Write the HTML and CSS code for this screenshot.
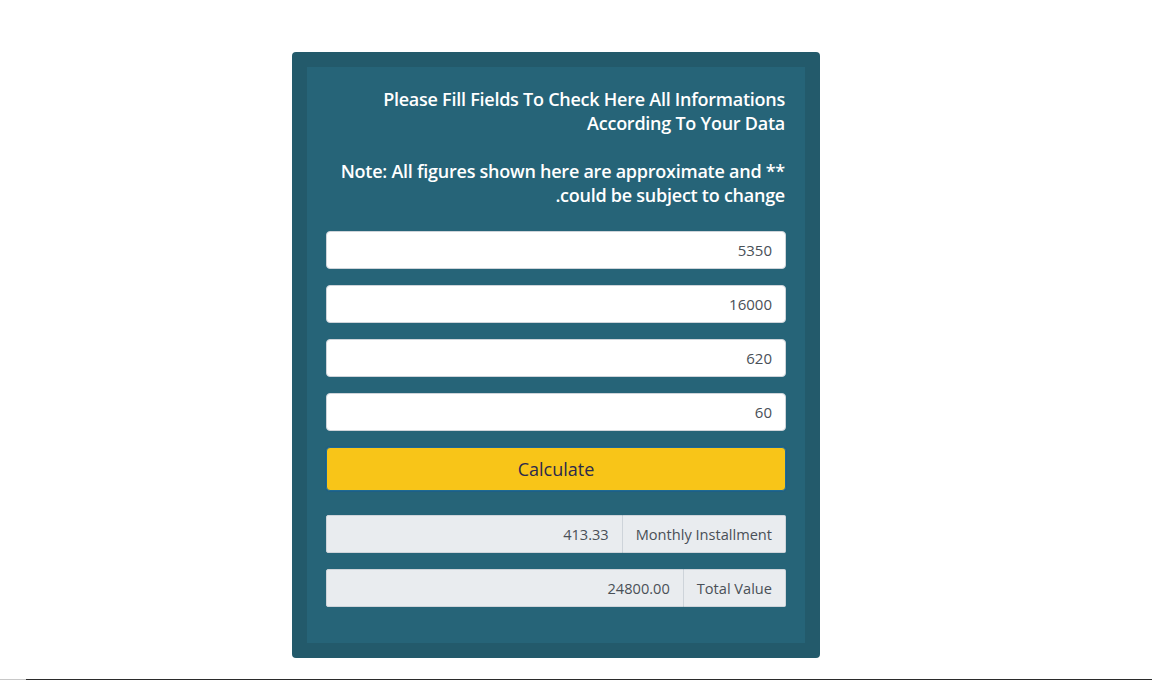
FILE: index.html
```html
<!DOCTYPE html>
<html lang="en">
<head>
    <meta charset="UTF-8">
    <meta name="viewport" content="width=device-width, initial-scale=1.0">
    <title>Installment Calculator</title>
    <link rel="stylesheet" href="styles.css">
</head>
<body>
    <div class="page">
        <div class="calc-card">
            <div class="calc-inner">
                <p class="intro">Please Fill Fields To Check Here All Informations<br>According To Your Data</p>
                <p class="intro">Note: All figures shown here are approximate and **<br>.could be subject to change</p>

                <div class="fields">
                    <input class="field" type="text" value="5350">
                    <input class="field" type="text" value="16000">
                    <input class="field" type="text" value="620">
                    <input class="field" type="text" value="60">
                </div>

                <button class="calc-btn" type="button">Calculate</button>

                <div class="results">
                    <div class="result-row">
                        <input class="result-value" type="text" value="413.33" readonly>
                        <span class="result-label">Monthly Installment</span>
                    </div>
                    <div class="result-row">
                        <input class="result-value" type="text" value="24800.00" readonly>
                        <span class="result-label">Total Value</span>
                    </div>
                </div>
            </div>
        </div>
    </div>
    <div class="page-line"><span class="page-line-start"></span></div>
</body>
</html>
```

FILE: styles.css
```css
body {
    margin: 0;
    background: #fff;
    font-family: "Open Sans", Arial, sans-serif;
    overflow: hidden;
}
.page {
    padding: 52px 0 0 292px;
    height: 627px;
}
.calc-card {
    width: 528px;
    box-sizing: border-box;
    padding: 15px;
    background: #235a6b;
    border-radius: 4px;
}
.calc-inner {
    background: #266478;
    padding: 20px 20px 36px 19px;
    text-align: right;
}
.intro {
    margin: 0 0 24px 0;
    color: #fff;
    font-size: 18px;
    font-weight: 600;
    line-height: 24px;
    letter-spacing: -0.25px;
}
.fields {
    display: flex;
    flex-direction: column;
    gap: 16px;
    margin-right: -1px;
}
.field,
.result-value {
    height: 38px;
    box-sizing: border-box;
    border: 1px solid #ced4da;
    border-radius: 4px;
    padding: 0 13px;
    font-family: inherit;
    font-size: 15px;
    color: #495057;
    text-align: right;
    background: #fff;
    outline: none;
}
.calc-btn {
    display: block;
    width: calc(100% + 1px);
    height: 44px;
    margin-top: 16px;
    background: #f8c518;
    border: 1px solid #1f6a93;
    border-radius: 4px;
    box-shadow: 0 0 0 1px #1d5f86;
    color: #2b2a4d;
    font-family: inherit;
    font-size: 18px;
    cursor: pointer;
}
.results {
    margin-top: 24px;
    margin-right: -1px;
    display: flex;
    flex-direction: column;
    gap: 16px;
}
.result-row {
    display: flex;
    height: 38px;
}
.result-value {
    flex: 1;
    min-width: 0;
    background: #e9ecef;
    border-radius: 2px 0 0 2px;
    font-size: 14.6px;
}
.result-label {
    display: flex;
    align-items: center;
    padding: 0 13px;
    background: #e9ecef;
    border: 1px solid #ced4da;
    border-left: none;
    border-radius: 0 2px 2px 0;
    color: #495057;
    font-size: 14.6px;
    white-space: nowrap;
}
.page-line {
    display: flex;
    height: 1px;
    background: #2b2b2b;
}
.page-line-start {
    width: 26px;
    background: #c8c8c8;
}
```
